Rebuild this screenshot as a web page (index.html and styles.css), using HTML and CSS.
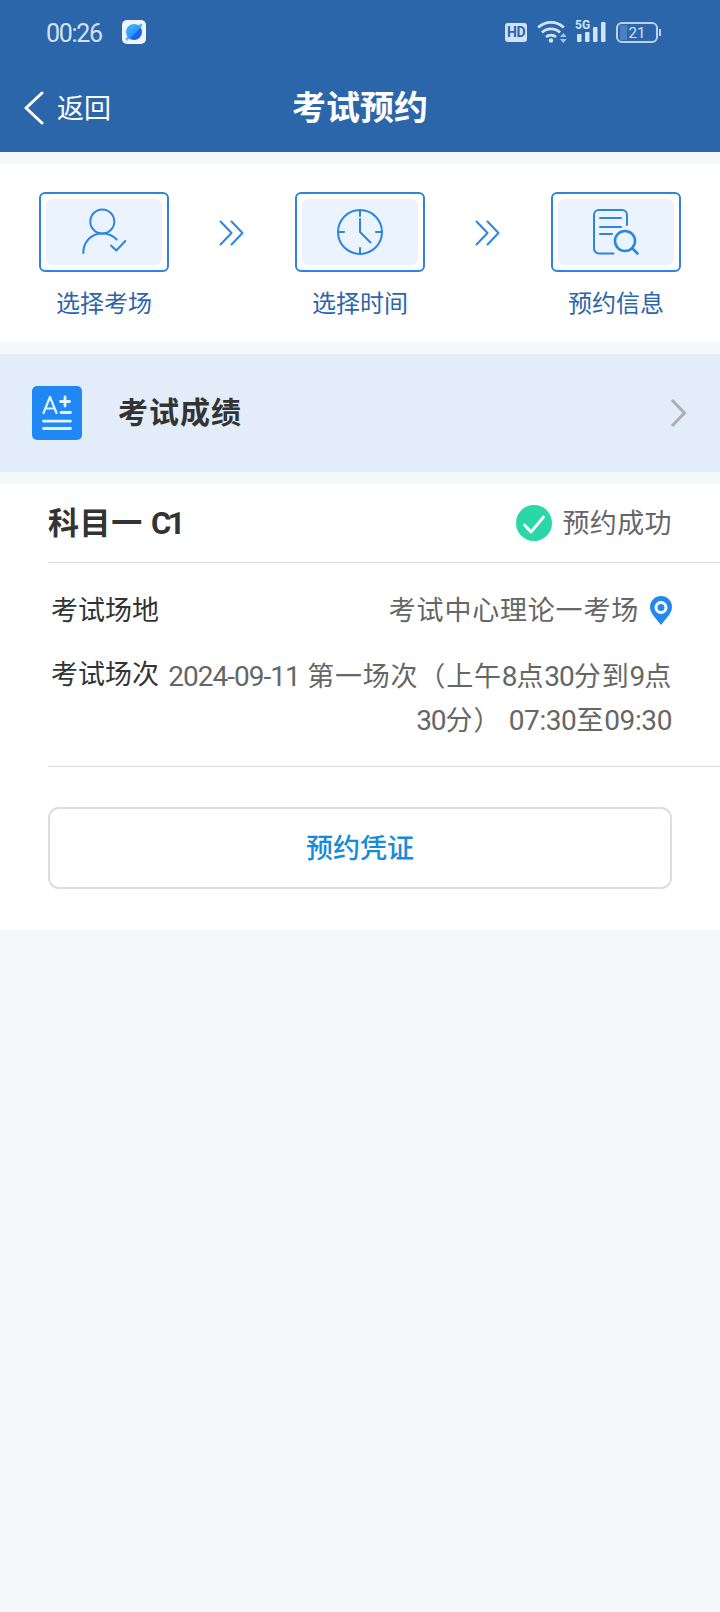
FILE: index.html
```html
<!DOCTYPE html>
<html lang="zh-CN">
<head>
    <meta charset="UTF-8">
    <meta name="viewport" content="width=device-width, initial-scale=1.0">
    <title>考试预约</title>
    <link rel="stylesheet" href="styles.css">
</head>
<body>
    <header>
        <div class="status-bar">
            <span class="time">00:26</span>
            <svg class="app-icon" width="24" height="24" viewBox="0 0 24 24">
                <defs>
                    <linearGradient id="planet" x1="0" y1="0" x2="1" y2="1">
                        <stop offset="0" stop-color="#45bdfb"/>
                        <stop offset="0.55" stop-color="#2f93fa"/>
                        <stop offset="0.6" stop-color="#1767f3"/>
                        <stop offset="1" stop-color="#1560ee"/>
                    </linearGradient>
                </defs>
                <rect width="24" height="24" rx="5" fill="#f1f5fc"/>
                <path d="M5 19 19 5" stroke="#5cb8fb" stroke-width="3" stroke-linecap="round"/>
                <circle cx="12" cy="12" r="8" fill="url(#planet)"/>
            </svg>
            <div class="status-icons">
                <span class="hd">HD</span>
                <svg class="wifi" width="30" height="24" viewBox="0 0 30 24">
                    <g fill="none" stroke="#d3e2f7" stroke-width="2.8">
                        <path d="M1.2 7.5a18.5 18.5 0 0 1 25.6 0"/>
                        <path d="M5 12.5a12.8 12.8 0 0 1 18 0"/>
                        <path d="M9 17a7.6 7.6 0 0 1 10 0"/>
                    </g>
                    <circle cx="14" cy="20.5" r="2.2" fill="#d3e2f7"/>
                    <path d="M23 17l3.3-4 3.3 4zM23 19l3.3 4 3.3-4z" fill="#a9c3e6"/>
                </svg>
                <div class="signal">
                    <span>5G</span>
                    <svg width="32" height="24" viewBox="0 0 32 24" fill="#d3e2f7">
                        <rect x="2" y="14" width="4.5" height="8" rx="1"/>
                        <rect x="10" y="12" width="4.5" height="10" rx="1"/>
                        <rect x="18" y="7" width="4.5" height="15" rx="1"/>
                        <rect x="26" y="2" width="4.5" height="20" rx="1"/>
                    </svg>
                </div>
                <div class="battery">21</div>
            </div>
        </div>
        <nav>
            <a class="back" href="#">
                <svg width="20" height="34" viewBox="0 0 20 34">
                    <path d="M18 2 2 17l16 15" fill="none" stroke="#fff" stroke-width="3" stroke-linecap="round" stroke-linejoin="round"/>
                </svg>
                <span>返回</span>
            </a>
            <h1>考试预约</h1>
        </nav>
    </header>

    <section class="steps">
        <div class="step">
            <div class="step-box">
                <svg width="116" height="66" viewBox="0 0 116 66">
                    <circle cx="56.3" cy="22.5" r="12"/>
                    <path d="M37.3 54c0-11.5 8-19.5 19-19.5 5.500 0 10.500 2 14.500 6"/>
                    <path d="m65 46.500 5.300 5 9-9.500"/>
                </svg>
            </div>
            <p>选择考场</p>
        </div>
        <svg class="arrows" width="26" height="26" viewBox="0 0 26 26">
            <path d="m1.500 1.500 11 11.500-11 11.500M12.500 1.500l11 11.500-11 11.500"/>
        </svg>
        <div class="step">
            <div class="step-box">
                <svg width="116" height="66" viewBox="0 0 116 66">
                    <circle cx="58" cy="33" r="22"/>
                    <path d="M58 11v6M58 49v6M36 33h6M74 33h6M58 20v13l10.500 10.500"/>
                </svg>
            </div>
            <p>选择时间</p>
        </div>
        <svg class="arrows" width="26" height="26" viewBox="0 0 26 26">
            <path d="m1.500 1.500 11 11.500-11 11.500M12.500 1.500l11 11.500-11 11.500"/>
        </svg>
        <div class="step">
            <div class="step-box">
                <svg width="116" height="66" viewBox="0 0 116 66">
                    <path d="M69 26V16a5 5 0 0 0-5-5H41a5 5 0 0 0-5 5v33.500a5 5 0 0 0 5 5h14.500"/>
                    <path d="M42 19h21M42 28h21M42 35h12"/>
                    <circle cx="67" cy="42" r="10" stroke-width="2.600"/>
                    <path d="m74.500 49.500 5 5" stroke-width="2.600"/>
                </svg>
            </div>
            <p>预约信息</p>
        </div>
    </section>

    <section class="score">
        <svg width="50" height="54" viewBox="0 0 50 54" fill="none" stroke="#e3f2fd" stroke-width="2.800" stroke-linecap="round" stroke-linejoin="round">
            <rect width="50" height="54" rx="5" fill="#2088f5" stroke="none"/>
            <path d="m11.500 27 6.500-16 6.500 16M14 22.500h8" stroke-width="2.200"/>
            <path d="M28.500 15.500h9M33 11v9M29 26.500h9.500M11.500 35.200h27M11.500 42.500h27"/>
        </svg>
        <h2>考试成绩</h2>
        <svg class="more" width="18" height="30" viewBox="0 0 18 30">
            <path d="m2 2 12.500 13L2 28" fill="none" stroke="#adafb2" stroke-width="3"/>
        </svg>
    </section>

    <main class="card">
        <div class="card-head">
            <h3>科目一 <span>C1</span></h3>
            <div class="result">
                <svg width="36" height="36" viewBox="0 0 36 36">
                    <circle cx="18" cy="18" r="18" fill="#2bd6a8"/>
                    <path d="m8.500 20 6.500 7 12.500-15" fill="none" stroke="#fff" stroke-width="2.800" stroke-linecap="round" stroke-linejoin="round"/>
                </svg>
                <span>预约成功</span>
            </div>
        </div>
        <div class="details">
            <div class="row">
                <span class="label">考试场地</span>
                <span class="value">考试中心理论一考场</span>
                <svg class="pin" width="22" height="29" viewBox="0 0 22 29">
                    <path d="M11 0a11 11 0 0 0-11 11c0 6 5.500 11 11 18 5.500-7 11-12 11-18A11 11 0 0 0 11 0z" fill="#2489ef"/>
                    <circle cx="11" cy="11.500" r="5" fill="#2489ef" stroke="#fff" stroke-width="3"/>
                </svg>
            </div>
            <div class="row session">
                <span class="label">考试场次</span>
                <span class="value"><span class="num">2024-09-11</span> 第一场次（上午<span class="num">8</span>点<span class="num">30</span>分到<span class="num">9</span>点<br><span class="num">30</span>分） <span class="num clock">07:30</span>至<span class="num clock">09:30</span></span>
            </div>
        </div>
        <button class="voucher">预约凭证</button>
    </main>
</body>
</html>
```
FILE: styles.css
```css
/* Color Scheme */
:root {
    --primary-color: #2b65aa;
    --accent-color: #2b86dc;
    --background-color: #f4f8fa;
    --text-color: #333333;
    --muted-color: #666666;
    --status-color: #d3e2f7;
    --line-color: #d9d9d9;
}

* {
    box-sizing: border-box;
}

body {
    margin: 0;
    min-height: 100vh;
    background-color: var(--background-color);
    color: var(--text-color);
    font-family: Roboto, "Noto Sans CJK SC", sans-serif;
}

h1, h2, h3, p {
    margin: 0;
}

/* Header */
header {
    height: 152px;
    background-color: var(--primary-color);
    color: #fff;
}

.status-bar {
    display: flex;
    align-items: center;
    height: 64px;
    padding: 0 62px 0 46px;
    color: var(--status-color);
}

.time {
    width: 76px;
    padding-top: 2px;
    font-size: 25px;
    letter-spacing: -1.3px;
}

.status-icons {
    display: flex;
    align-items: center;
    margin-left: auto;
}

.hd {
    width: 22px;
    height: 19px;
    border-radius: 3px;
    background-color: var(--status-color);
    color: var(--primary-color);
    font-size: 14px;
    font-weight: bold;
    line-height: 19px;
    text-align: center;
    letter-spacing: -0.5px;
}

.wifi {
    margin-left: 10px;
}

.signal {
    position: relative;
    height: 24px;
    margin-left: 8px;
}

.signal span {
    position: absolute;
    top: -1px;
    left: 0;
    font-size: 12px;
    font-weight: bold;
    line-height: 13px;
}

.battery {
    position: relative;
    width: 42px;
    height: 21px;
    margin-left: 9px;
    border: 2px solid #bcd1ee;
    border-radius: 6px;
    background: linear-gradient(#4b80c0, #4b80c0) 2px 1px / 7px 15px no-repeat;
    font-size: 15px;
    line-height: 18px;
    text-align: center;
}

.battery::after {
    content: "";
    position: absolute;
    top: 5px;
    right: -5px;
    width: 2px;
    height: 7px;
    background-color: #bcd1ee;
}

nav {
    display: grid;
    grid-template-columns: 1fr auto 1fr;
    align-items: center;
    height: 88px;
    padding: 0 24px;
}

.back {
    display: flex;
    align-items: center;
    gap: 13px;
    color: #fff;
    font-size: 27px;
    text-decoration: none;
}

.back span {
    padding-bottom: 4px;
}

h1 {
    font-size: 34px;
    line-height: 88px;
}

/* Steps */
.steps {
    display: flex;
    justify-content: space-between;
    height: 178px;
    margin: 12px 0;
    padding: 28px 39px 0;
    background-color: #fff;
}

.step {
    width: 130px;
    text-align: center;
}

.step-box {
    height: 80px;
    padding: 5px;
    border: 2px solid var(--accent-color);
    border-radius: 6px;
}

.step-box svg {
    display: block;
    border-radius: 6px;
    background-color: #eaf3ff;
}

.steps svg {
    fill: none;
    stroke: var(--accent-color);
    stroke-width: 2;
    stroke-linecap: round;
    stroke-linejoin: round;
}

.step p {
    margin-top: 14px;
    color: var(--primary-color);
    font-size: 24px;
    line-height: 36px;
}

.arrows {
    margin-top: 28px;
}

/* Score link */
.score {
    display: flex;
    align-items: center;
    height: 118px;
    padding: 0 32px;
    background-color: #e3edf9;
}

h2 {
    margin-left: 36px;
    padding-bottom: 6px;
    font-size: 30px;
    letter-spacing: 1px;
}

.more {
    margin-left: auto;
}

/* Booking card */
.card {
    height: 446px;
    margin-top: 12px;
    padding-left: 48px;
    background-color: #fff;
}

.card-head {
    display: flex;
    align-items: center;
    justify-content: space-between;
    height: 79px;
    padding-right: 48px;
    border-bottom: 1px solid var(--line-color);
}

h3 {
    padding-bottom: 6px;
    font-size: 31px;
    letter-spacing: 0.6px;
}

h3 span {
    letter-spacing: -4px;
}

.result {
    display: flex;
    align-items: center;
    gap: 10px;
    color: var(--muted-color);
    font-size: 27px;
    letter-spacing: 0.4px;
}

.result span {
    padding-bottom: 4px;
}

.details {
    height: 204px;
    padding: 27px 48px 0 3px;
    border-bottom: 1px solid var(--line-color);
    font-size: 27px;
    line-height: 43px;
}

.row {
    display: flex;
    align-items: center;
}

.value {
    margin-left: auto;
    color: var(--muted-color);
    letter-spacing: 0.8px;
    text-align: right;
    white-space: nowrap;
}

.pin {
    margin: -3px 0 0 11px;
}

.session {
    align-items: flex-start;
    margin-top: 22px;
}

.session .label {
    margin-top: -1px;
}

.num {
    font-size: 28px;
    letter-spacing: -1px;
}

.clock {
    letter-spacing: -0.4px;
}

.voucher {
    display: block;
    width: 624px;
    height: 82px;
    margin-top: 40px;
    padding-bottom: 5px;
    border: 2px solid #dddddd;
    border-radius: 11px;
    background-color: #fff;
    color: #168bdc;
    font-family: inherit;
    font-size: 27px;
    font-weight: 500;
}
```
